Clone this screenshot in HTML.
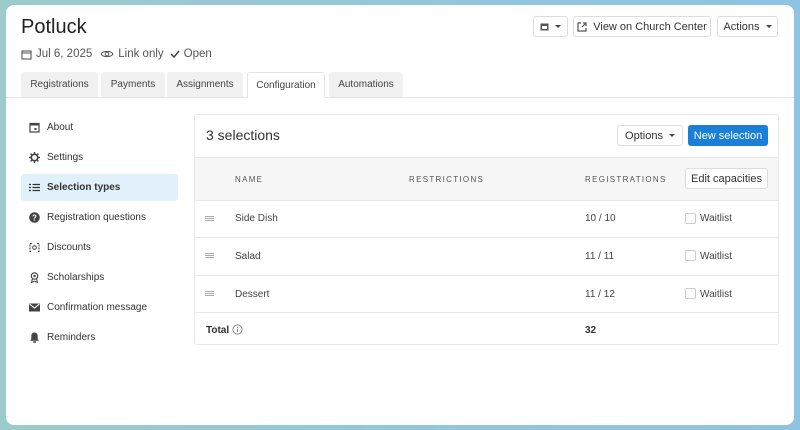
<!DOCTYPE html>
<html><head><meta charset="utf-8"><style>
*{box-sizing:border-box;margin:0;padding:0}
body{width:800px;height:430px;overflow:hidden;font-family:"Liberation Sans",sans-serif;background:linear-gradient(90deg,#9ccbcb,#93c5dd 60%,#8ec3e2);position:relative;color:#333}
.panel{position:absolute;left:6px;top:5px;width:788px;height:420px;background:#fff;border-radius:8px;overflow:hidden}
.abs{position:absolute}
h1{position:absolute;left:15px;top:11px;font-size:20px;font-weight:400;color:#222}
.meta{position:absolute;left:15px;top:43px;font-size:11.5px;color:#555;display:flex;align-items:center;gap:4px}
.btn{position:absolute;border:1px solid #ddd;border-radius:3px;background:#fff;font-size:11px;color:#333;display:flex;align-items:center;justify-content:center;gap:6px;white-space:nowrap}
.caret{width:0;height:0;border-left:3px solid transparent;border-right:3px solid transparent;border-top:3px solid #444}
.tabline{position:absolute;left:0;right:0;top:92px;height:1px;background:#e4e4e4}
.tab{position:absolute;top:67px;height:25px;background:#f1f1f1;border-radius:3px 3px 0 0;font-size:10px;color:#444;display:flex;align-items:center;justify-content:center}
.tab.act{background:#fff;border:1px solid #e4e4e4;border-bottom:1px solid #fff;height:26px}
.side{position:absolute;left:15px;width:157px;height:27px;font-size:10px;color:#333;display:flex;align-items:center;padding-left:8px;border-radius:3px}
.side svg{margin-right:7px}
.side.act{background:#e1f1fc;font-weight:bold}
.card{position:absolute;left:188px;top:109px;width:585px;height:231px;border:1px solid #e8e8e8;border-radius:3px;overflow:hidden}
.row{position:absolute;left:0;right:0;border-top:1px solid #e8e8e8;font-size:10px;color:#444}
.cell{position:absolute}
.th{font-size:8px;letter-spacing:1.3px;color:#555}
.cb{position:absolute;left:490px;width:11px;height:11px;border:1px solid #ccc;border-radius:2px;background:#fff}
.drag{position:absolute;left:10px;width:9px;height:5px;border-top:1px solid #aaa;border-bottom:1px solid #aaa}
.drag:after{content:"";position:absolute;left:0;right:0;top:1px;border-top:1px solid #aaa}
</style></head><body>
<div class="panel">
<h1>Potluck</h1>
<div class="meta">
<svg width="11" height="11" viewBox="0 0 11 11"><rect x="1" y="2" width="9" height="8" fill="none" stroke="#555" stroke-width="1.1"/><line x1="1" y1="4" x2="10" y2="4" stroke="#555"/></svg><span>Jul 6, 2025</span>
<svg width="14" height="10" viewBox="0 0 14 10" style="margin-left:4px"><path d="M1 5C3 1.5 11 1.5 13 5C11 8.5 3 8.5 1 5Z" fill="none" stroke="#555"/><circle cx="7" cy="5" r="1.8" fill="none" stroke="#555"/></svg><span>Link only</span>
<svg width="10" height="10" viewBox="0 0 10 10" style="margin-left:2px"><path d="M1 5l3 3 5-6" fill="none" stroke="#444" stroke-width="1.5"/></svg><span>Open</span>
</div>
<div class="btn" style="left:527px;top:11px;width:35px;height:21px"><svg width="9" height="9" viewBox="0 0 9 9"><rect x="0.5" y="1.5" width="8" height="7" fill="#555"/><rect x="2" y="4" width="5" height="3" fill="#fff"/></svg><span class="caret"></span></div>
<div class="btn" style="left:567px;top:11px;width:138px;height:21px"><svg width="10" height="10" viewBox="0 0 10 10"><path d="M4 1H1v8h8V6M6 1h3v3M9 1L5 5" fill="none" stroke="#555" stroke-width="1.2"/></svg>View on Church Center</div>
<div class="btn" style="left:711px;top:11px;width:61px;height:21px">Actions<span class="caret"></span></div>
<div class="tabline"></div>
<div class="tab" style="left:15px;width:77px">Registrations</div>
<div class="tab" style="left:95px;width:64px">Payments</div>
<div class="tab" style="left:161px;width:76px">Assignments</div>
<div class="tab act" style="left:241px;width:78px">Configuration</div>
<div class="tab" style="left:323px;width:74px">Automations</div>

<div class="side" style="top:109px"><svg width="11" height="11" viewBox="0 0 11 11"><rect x="1" y="1.5" width="9" height="8.5" fill="none" stroke="#444" stroke-width="1.2"/><rect x="1" y="1.5" width="9" height="2" fill="#444"/><rect x="5.5" y="6" width="2" height="2" fill="#444"/></svg>About</div>
<div class="side" style="top:139px"><svg width="11" height="11" viewBox="0 0 11 11"><circle cx="5.5" cy="5.5" r="3.2" fill="none" stroke="#444" stroke-width="1.6"/><path d="M5.5 0v2M5.5 9v2M0 5.5h2M9 5.5h2M1.6 1.6l1.4 1.4M8 8l1.4 1.4M1.6 9.4L3 8M8 3l1.4-1.4" stroke="#444" stroke-width="1.5"/></svg>Settings</div>
<div class="side act" style="top:169px"><svg width="11" height="11" viewBox="0 0 11 11"><path d="M0 2.5h2M0 5.5h2M0 8.5h2M3.5 2.5h7.5M3.5 5.5h7.5M3.5 8.5h7.5" stroke="#333" stroke-width="1.3"/></svg>Selection types</div>
<div class="side" style="top:199px"><svg width="11" height="11" viewBox="0 0 11 11"><circle cx="5.5" cy="5.5" r="5.3" fill="#444"/><text x="5.5" y="8.5" font-size="8" font-weight="bold" fill="#fff" text-anchor="middle" font-family="Liberation Sans">?</text></svg>Registration questions</div>
<div class="side" style="top:229px"><svg width="11" height="11" viewBox="0 0 11 11"><path d="M3 1.5H1v8h2M8 1.5h2v8H8" fill="none" stroke="#444" stroke-width="1.1" stroke-dasharray="2 1"/><circle cx="5.5" cy="5.5" r="1.8" fill="none" stroke="#444"/></svg>Discounts</div>
<div class="side" style="top:259px"><svg width="11" height="11" viewBox="0 0 11 11"><circle cx="5.5" cy="4" r="3.2" fill="none" stroke="#444" stroke-width="1.2"/><circle cx="5.5" cy="4" r="1.2" fill="#444"/><path d="M3.5 6.5L2.5 10.5l3-1.3 3 1.3-1-4" fill="none" stroke="#444"/></svg>Scholarships</div>
<div class="side" style="top:289px"><svg width="11" height="11" viewBox="0 0 11 11"><rect x="0" y="1.5" width="11" height="8" fill="#444"/><path d="M0.5 2l5 4 5-4" fill="none" stroke="#fff" stroke-width="1.1"/></svg>Confirmation message</div>
<div class="side" style="top:319px"><svg width="11" height="11" viewBox="0 0 11 11"><path d="M5.5 0.5C3 0.5 2.3 2.5 2.3 4.5v2.5L1 8.7h9L8.7 7V4.5C8.7 2.5 8 0.5 5.5 0.5z" fill="#444"/><rect x="4" y="9.3" width="3" height="1.5" rx="0.7" fill="#444"/></svg>Reminders</div>

<div class="card">
<div class="cell" style="left:11px;top:12px;font-size:14px;color:#333">3 selections</div>
<div class="btn" style="left:422px;top:10px;width:66px;height:21px">Options<span class="caret"></span></div>
<div class="btn" style="left:493px;top:10px;width:80px;height:21px;background:#1a7fd6;border-color:#1a7fd6;color:#fff">New selection</div>
<div class="row" style="top:42px;height:43px;background:#f7f7f7">
<div class="cell th" style="left:40px;top:17px">NAME</div>
<div class="cell th" style="left:214px;top:17px">RESTRICTIONS</div>
<div class="cell th" style="left:390px;top:17px">REGISTRATIONS</div>
<div class="btn" style="left:490px;top:10px;width:83px;height:21px">Edit capacities</div>
</div>
<div class="row" style="top:85px;height:38px"><div class="drag" style="top:15px"></div><div class="cell" style="left:40px;top:12px">Side Dish</div><div class="cell" style="left:390px;top:12px">10 / 10</div><div class="cb" style="top:12px"></div><div class="cell" style="left:505px;top:12px">Waitlist</div></div>
<div class="row" style="top:122px;height:38px"><div class="drag" style="top:15px"></div><div class="cell" style="left:40px;top:13px">Salad</div><div class="cell" style="left:390px;top:13px">11 / 11</div><div class="cb" style="top:12px"></div><div class="cell" style="left:505px;top:13px">Waitlist</div></div>
<div class="row" style="top:160px;height:38px"><div class="drag" style="top:15px"></div><div class="cell" style="left:40px;top:13px">Dessert</div><div class="cell" style="left:390px;top:13px">11 / 12</div><div class="cb" style="top:12px"></div><div class="cell" style="left:505px;top:13px">Waitlist</div></div>
<div class="row" style="top:197px;height:34px;font-weight:bold;color:#333"><div class="cell" style="left:11px;top:12px">Total</div><svg class="cell" style="left:37px;top:11px" width="11" height="11" viewBox="0 0 11 11"><circle cx="5.5" cy="5.5" r="4.6" fill="none" stroke="#888"/><path d="M5.5 4.8v3.2" stroke="#888"/><circle cx="5.5" cy="3.3" r="0.6" fill="#888"/></svg><div class="cell" style="left:390px;top:12px">32</div></div>
</div>
</div>
</body></html>
